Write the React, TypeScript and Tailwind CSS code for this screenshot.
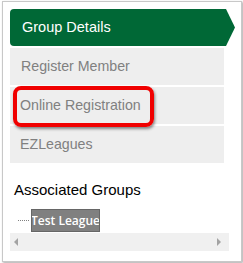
import React from "react";

export default function App() {
  return (
    <div className="w-[243px] h-[263px] bg-white pt-[1px] pl-[2px]" style={{ fontFamily: '"Liberation Sans", Arial, sans-serif' }}>
      <div className="w-[240px] h-[261px] border border-[#c8c8c8] shadow-[1px_1px_2px_rgba(0,0,0,0.35)] pt-[7px] pl-[7px] flex flex-col">
        <div className="flex flex-col gap-[2px]">
          <div className="h-[37px] w-[225px] bg-[#006836] rounded-l-[4px] [clip-path:polygon(0_0,216px_0,225px_50%,216px_100%,0_100%)] flex items-center pl-[12px] text-white text-[14.5px]">
            Group Details
          </div>
          <div className="h-[37px] w-[214px] bg-[#eeeeee] flex items-center pl-[11px] text-[#808080] text-[14.2px]">
            Register Member
          </div>
          <div className="relative h-[37px] w-[214px] bg-[#eeeeee] flex items-center pl-[10px] text-[#808080] text-[14.2px]">
            Online Registration
            <div className="absolute left-[3px] top-[-1px] w-[141px] h-[41px] border-[4px] border-[#f00000] rounded-[8px] shadow-[1px_2px_3px_rgba(0,0,0,0.45)]" />
          </div>
          <div className="h-[37px] w-[214px] bg-[#eeeeee] flex items-center pl-[10px] text-[#808080] text-[14.2px]">
            EZLeagues
          </div>
        </div>
        <div className="mt-[18px] ml-[4px] text-[15px] leading-[17px] text-black">Associated Groups</div>
        <div className="mt-[11px] flex items-center">
          <div className="ml-[8px] w-[11px] border-t border-dotted border-[#808080]" />
          <div className="ml-[2px] w-[69px] h-[23px] bg-[#808080] border border-[#666666] flex items-center justify-center whitespace-nowrap overflow-hidden text-[12px] font-semibold text-white" style={{ fontFamily: '"Open Sans", "Noto Sans", sans-serif' }}>
            Test League
          </div>
        </div>
        <div className="mt-[1px] w-[219px] h-[18px] bg-[#f0f0f0] flex items-center justify-between px-[4px]">
          <div className="w-0 h-0 border-y-[4px] border-y-transparent border-r-[4px] border-r-[#a3a3a3]" />
          <div className="w-0 h-0 border-y-[4px] border-y-transparent border-l-[4px] border-l-[#a3a3a3] mr-[4px]" />
        </div>
      </div>
    </div>
  );
}
